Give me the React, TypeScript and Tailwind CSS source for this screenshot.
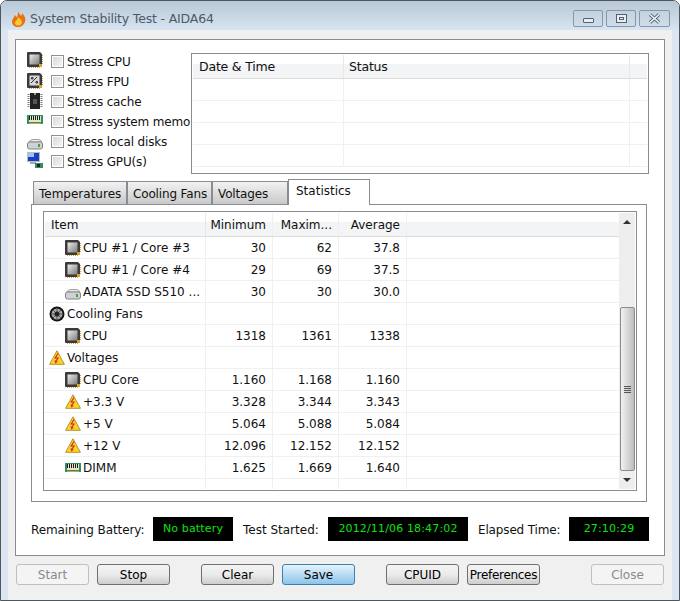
import React from "react";

function CpuIcon({ pct }: { pct?: boolean }) {
  return (
    <svg width="16" height="16" viewBox="0 0 16 16" className="block shrink-0">
      <defs>
        <linearGradient id="cpuG" x1="0" y1="0" x2="1" y2="1">
          <stop offset="0" stopColor="#ececec" />
          <stop offset="1" stopColor="#7c7c7c" />
        </linearGradient>
      </defs>
      <path d="M0 1 Q0 0 1 0 H13 L15 2 V15 H1 Q0 15 0 14 Z" fill="#3a3a3a" />
      <rect x="2.5" y="2.5" width="10" height="10" fill={pct ? "#d8d8d8" : "url(#cpuG)"} />
      {pct && <path d="M4 10 L10 4 M4.5 4.5 h1.5 v1.5 h-1.5z M9 8.5 h1.5 v1.5 h-1.5z" stroke="#333" strokeWidth="1" fill="none" />}
      <path d="M15.5 3 V13 M2 15.5 H13" stroke="#c9a24a" strokeWidth="1" strokeDasharray="1 1" />
      <rect x="12" y="12" width="3" height="3" fill="#d9a520" />
    </svg>
  );
}

function CacheIcon() {
  return (
    <svg width="16" height="16" viewBox="0 0 16 16" className="block shrink-0">
      <rect x="3" y="0" width="10" height="16" fill="#222" />
      <path d="M1.5 1 V15 M14.5 1 V15" stroke="#777" strokeWidth="2" strokeDasharray="1 1" />
      <rect x="6" y="6" width="4" height="5" fill="#555" />
      <rect x="7" y="0" width="2" height="2" fill="#999" />
    </svg>
  );
}

function RamIcon() {
  return (
    <svg width="16" height="10" viewBox="0 0 16 10" className="block shrink-0" shapeRendering="crispEdges">
      <rect x="0" y="0" width="16" height="9" fill="#2f9065" />
      <rect x="2" y="1" width="12" height="6" fill="#e9e4c8" />
      <path d="M2.5 1 V5 M4.5 1 V5 M6.5 1 V5 M8.5 1 V5 M10.5 1 V5 M12.5 1 V5" stroke="#1c1c1c" strokeWidth="1" />
      <path d="M2 8.5 H14" stroke="#d0a83c" strokeWidth="1" />
    </svg>
  );
}

function DiskIcon() {
  return (
    <svg width="16" height="11" viewBox="0 0 16 11" className="mt-[6px] block shrink-0">
      <path d="M2 3 Q3 0.5 6 0.5 H11 Q14 0.5 15 3 Z" fill="#efefef" stroke="#a0a0a0" />
      <rect x="0.5" y="3" width="15" height="7" rx="2" fill="#ced2d4" stroke="#808487" />
      <rect x="11" y="5" width="2" height="3" fill="#4aa04a" />
    </svg>
  );
}

function GpuIcon() {
  return (
    <svg width="16" height="16" viewBox="0 0 16 16" className="-mt-[2px] block shrink-0">
      <rect x="0" y="0" width="13" height="10" fill="#b8bcc4" />
      <rect x="1" y="1" width="11" height="8" fill="#1a3fc0" />
      <path d="M1 1 H7 V5 H1 Z" fill="#9cc4f0" />
      <rect x="3" y="10" width="6" height="2" fill="#aaa" />
      <rect x="8" y="11" width="8" height="5" fill="#2f8f62" />
      <rect x="10" y="12" width="3" height="3" fill="#222" />
    </svg>
  );
}

function FanIcon() {
  return (
    <svg width="16" height="16" viewBox="0 0 16 16" className="block shrink-0">
      <circle cx="8" cy="8" r="7.5" fill="#111" />
      <circle cx="8" cy="8" r="5.5" fill="#a8a8a8" />
      <path d="M8 2.5 V13.5 M2.5 8 H13.5 M4 4 L12 12 M12 4 L4 12" stroke="#555" strokeWidth="1" />
      <circle cx="8" cy="8" r="2.5" fill="#222" />
    </svg>
  );
}

function VoltIcon() {
  return (
    <svg width="16" height="15" viewBox="0 0 16 15" className="block shrink-0">
      <path d="M8 0.8 L15.4 14.3 H0.6 Z" fill="#f8d42a" stroke="#b8912a" strokeLinejoin="round" />
      <path d="M9 3.5 L6.2 8 H9 L7 11 M6 10.5 L6.7 12.6 L8.4 11.4" fill="none" stroke="#d42020" strokeWidth="1.1" />
    </svg>
  );
}

function FlameIcon() {
  return (
    <svg width="14" height="16" viewBox="0 0 14 16" className="mt-[10px] block shrink-0">
      <path d="M6 0 C7 3 8 3 9 5 C10 3.5 10 3 10 2 C13 5 14 8 13 11 C12 14 9 16 6 16 C3 16 0 14 0 11 C0 8 2 7 3 4 C4 5 4 6 5 6 C6 4 6 2 6 0 Z" fill="#e8720e" />
      <path d="M6 6 C8 8 10 9 10 11.5 C10 13.5 8 14.5 6 14.5 C4 14.5 2.5 13 3 11 C4 10 5.5 9 6 6 Z" fill="#f9c83a" />
    </svg>
  );
}

function StressRow({ icon, label, nudge = "" }: { icon: React.ReactNode; label: string; nudge?: string }) {
  return (
    <div className="flex h-[20px] w-[163px] items-center overflow-hidden">
      <div className={`flex w-[24px] shrink-0 items-center justify-start ${nudge}`}>{icon}</div>
      <div className="box-border h-[13px] w-[13px] shrink-0 border border-[#8e8f8f] bg-white p-[1px]">
        <div className="h-full w-full bg-gradient-to-br from-[#d6d9dd] to-[#f4f5f6]" />
      </div>
      <span className="ml-[3px] whitespace-nowrap pt-[2px] tracking-[-0.15px]">{label}</span>
    </div>
  );
}

function WinBtn({ children, w }: { children: React.ReactNode; w: string }) {
  return (
    <div className={`${w} flex h-[17px] items-center justify-center rounded-[2px] border border-[#8696ab] bg-gradient-to-b from-[#c4d1df] to-[#cfdcea]`}>
      {children}
    </div>
  );
}

function Tab({ label, w, pl, tight }: { label: string; w: string; pl: string; tight?: boolean }) {
  return (
    <div className={`${w} ${pl} ${tight ? "tracking-[-0.15px]" : ""} box-border flex h-[23px] items-center whitespace-nowrap border border-b-0 border-[#898c95] bg-gradient-to-b from-[#f2f2f2] to-[#c9c9c9] pt-[2px]`}>
      {label}
    </div>
  );
}

type Row = { icon: React.ReactNode; name: string; min?: string; max?: string; avg?: string; top?: boolean };

const rows: Row[] = [
  { icon: <CpuIcon />, name: "CPU #1 / Core #3", min: "30", max: "62", avg: "37.8" },
  { icon: <CpuIcon />, name: "CPU #1 / Core #4", min: "29", max: "69", avg: "37.5" },
  { icon: <DiskIcon />, name: "ADATA SSD S510 ...", min: "30", max: "30", avg: "30.0" },
  { icon: <FanIcon />, name: "Cooling Fans", top: true },
  { icon: <CpuIcon />, name: "CPU", min: "1318", max: "1361", avg: "1338" },
  { icon: <VoltIcon />, name: "Voltages", top: true },
  { icon: <CpuIcon />, name: "CPU Core", min: "1.160", max: "1.168", avg: "1.160" },
  { icon: <VoltIcon />, name: "+3.3 V", min: "3.328", max: "3.344", avg: "3.343" },
  { icon: <VoltIcon />, name: "+5 V", min: "5.064", max: "5.088", avg: "5.084" },
  { icon: <VoltIcon />, name: "+12 V", min: "12.096", max: "12.152", avg: "12.152" },
  { icon: <RamIcon />, name: "DIMM", min: "1.625", max: "1.669", avg: "1.640" },
];

function Num({ w, children }: { w: string; children?: React.ReactNode }) {
  return (
    <div className={`${w} box-border flex h-full items-center justify-end border-r border-[#f0f0f0] pr-[6px]`}>{children}</div>
  );
}

function Btn({ label, w = "w-[73px]", ml, disabled, primary, tight }: { label: string; w?: string; ml: string; disabled?: boolean; primary?: boolean; tight?: boolean }) {
  const skin = disabled
    ? "border-[#bfbfbf] bg-[#f4f4f4] text-[#8a8a8a]"
    : primary
      ? "border-[#3c7fb1] bg-gradient-to-b from-[#e4f3fc] via-[#b8dcf3] to-[#8cc4ea] text-black"
      : "border-[#707070] bg-gradient-to-b from-[#f4f4f4] via-[#ebebeb] to-[#cdcdcd] text-black";
  return (
    <div className={`${w} ${ml} ${skin} box-border flex h-[21px] shrink-0 items-center justify-center whitespace-nowrap rounded-[3px] border ${tight ? "tracking-[-0.3px]" : ""}`}>
      {label}
    </div>
  );
}

function Led({ w, children }: { w: string; children: string }) {
  return (
    <div className={`${w} flex h-[24px] shrink-0 items-center justify-center bg-black text-[11px] tracking-[0.15px] text-[#0fe00f]`}>
      {children}
    </div>
  );
}

export default function App() {
  return (
    <div className="box-border flex h-[601px] w-[680px] flex-col overflow-hidden rounded-t-[7px] border border-[#50565e] bg-[#dbe6f2] font-['DejaVu_Sans',sans-serif] text-[12px] text-[#111]">
      <div className="flex h-[29px] shrink-0 items-start bg-gradient-to-b from-[#b9c8d6] to-[#d7e4f1] pl-[11px] pr-[9px]">
        <FlameIcon />
        <span className="ml-[4px] mt-[10px] text-[12.5px] leading-[16px] tracking-[-0.17px] text-[#4d5966]">System Stability Test - AIDA64</span>
        <div className="ml-auto mt-[9px] flex gap-[3px]">
          <WinBtn w="w-[30px]">
            <div className="mt-[3px] h-[5px] w-[11px] rounded-[1px] border border-[#55606e] bg-[#e8edf2]" />
          </WinBtn>
          <WinBtn w="w-[30px]">
            <div className="flex h-[9px] w-[11px] items-center justify-center border border-[#55606e] bg-[#e8edf2]">
              <div className="h-[3px] w-[5px] border border-[#55606e]" />
            </div>
          </WinBtn>
          <WinBtn w="w-[31px]">
            <svg width="13" height="11" viewBox="0 0 13 11">
              <path d="M2 1.5 L11 9.5 M11 1.5 L2 9.5" stroke="#5c6875" strokeWidth="3.4" />
              <path d="M2 1.5 L11 9.5 M11 1.5 L2 9.5" stroke="#eef2f6" strokeWidth="1.6" />
            </svg>
          </WinBtn>
        </div>
      </div>

      <div className="mx-[7px] flex flex-1 flex-col bg-[#f0f0f0] px-[7px] pb-[37px] pt-[9px]">
        <div className="box-border h-[517px] border border-[#898c95] bg-white">
          <div className="flex pl-[11px] pt-[11px]">
            <div className="w-[164px] shrink-0">
              <StressRow icon={<CpuIcon />} label="Stress CPU" nudge="-mt-[2px]" />
              <StressRow icon={<CpuIcon pct />} label="Stress FPU" />
              <StressRow icon={<CacheIcon />} label="Stress cache" />
              <StressRow icon={<RamIcon />} label="Stress system memory" nudge="-mt-[2px]" />
              <StressRow icon={<DiskIcon />} label="Stress local disks" />
              <StressRow icon={<GpuIcon />} label="Stress GPU(s)" />
            </div>
            <div className="mt-[2px] box-border h-[121px] w-[458px] overflow-hidden border border-[#898c95] p-[1px]">
              <div className="flex h-[24px] border-b border-[#dcdcdc] bg-[linear-gradient(#fff_0,#fff_40%,#f3f4f6_40%,#f3f4f6_100%)] text-[12.5px] tracking-[-0.2px]">
                <div className="w-[151px] border-r border-[#e8e8e8] pl-[6px] pt-[3px]">Date &amp; Time</div>
                <div className="w-[286px] border-r border-[#e8e8e8] pl-[5px] pt-[3px]">Status</div>
              </div>
              {[0, 1, 2, 3].map((i) => (
                <div key={i} className="flex h-[22px] border-b border-[#f0f0f0]">
                  <div className="w-[151px] border-r border-[#f0f0f0]" />
                  <div className="w-[286px] border-r border-[#f0f0f0]" />
                </div>
              ))}
            </div>
          </div>

          <div className="ml-[17px] mt-[5px] flex h-[25px] items-end">
            <Tab label="Temperatures" w="w-[94px]" pl="pl-[5px]" />
            <Tab label="Cooling Fans" w="w-[85px]" pl="pl-[5px]" tight />
            <Tab label="Voltages" w="w-[76px]" pl="pl-[5px]" tight />
            <div className="relative z-10 -mb-[1px] box-border flex h-[26px] w-[82px] items-start border border-b-0 border-[#898c95] bg-white pl-[7px] pt-[2px]">
              Statistics
            </div>
          </div>

          <div className="ml-[15px] box-border h-[298px] w-[616px] border border-[#898c95] px-[11px] pt-[6px]">
            <div className="box-border flex h-[280px] w-[594px] border border-[#898c95] p-[1px]">
              <div className="flex min-w-0 flex-1 flex-col">
                <div className="flex h-[24px] shrink-0 items-center border-b border-[#dcdcdc] bg-[linear-gradient(#fff_0,#fff_40%,#f3f4f6_40%,#f3f4f6_100%)]">
                  <div className="box-border flex h-full w-[161px] items-center border-r border-[#e8e8e8] pl-[6px]">Item</div>
                  <Num w="w-[67px]">Minimum</Num>
                  <Num w="w-[66px]">Maxim...</Num>
                  <Num w="w-[68px]">Average</Num>
                </div>
                {rows.map((r) => (
                  <div key={r.name + r.min} className="flex h-[22px] shrink-0 items-center border-b border-[#f0f0f0]">
                    <div className={`box-border flex h-full w-[161px] items-center border-r border-[#f0f0f0] whitespace-nowrap ${r.top ? "pl-[4px]" : "pl-[20px]"}`}>
                      <div className="flex w-[18px] shrink-0 items-center">{r.icon}</div>
                      {r.name}
                    </div>
                    <Num w="w-[67px]">{r.min}</Num>
                    <Num w="w-[66px]">{r.max}</Num>
                    <Num w="w-[68px]">{r.avg}</Num>
                  </div>
                ))}
                <div className="flex min-h-0 flex-1">
                  <div className="w-[161px] border-r border-[#f0f0f0]" />
                  <div className="w-[67px] border-r border-[#f0f0f0]" />
                  <div className="w-[66px] border-r border-[#f0f0f0]" />
                  <div className="w-[68px] border-r border-[#f0f0f0]" />
                </div>
              </div>

              <div className="flex w-[16px] shrink-0 flex-col items-center bg-[#eeeeee]">
                <div className="flex h-[18px] w-full items-center justify-center">
                  <div className="h-0 w-0 border-x-[4px] border-b-[4px] border-x-transparent border-b-[#333]" />
                </div>
                <div className="h-[76px]" />
                <div className="box-border flex h-[164px] w-[15px] flex-col items-center justify-center gap-[1px] rounded-[2px] border border-[#8b8b8b] bg-gradient-to-r from-[#f2f2f2] to-[#bdbdbd]">
                  <div className="h-[1px] w-[7px] bg-[#555]" />
                  <div className="h-[1px] w-[7px] bg-[#555]" />
                  <div className="h-[1px] w-[7px] bg-[#555]" />
                  <div className="h-[1px] w-[7px] bg-[#555]" />
                </div>
                <div className="flex h-[18px] w-full items-center justify-center">
                  <div className="h-0 w-0 border-x-[4px] border-t-[4px] border-x-transparent border-t-[#333]" />
                </div>
              </div>
            </div>
          </div>

          <div className="mt-[15px] flex items-center pl-[15px]">
            <span className="w-[122px] shrink-0 whitespace-nowrap pt-[2px] tracking-[-0.1px]">Remaining Battery:</span>
            <Led w="w-[80px]">No battery</Led>
            <span className="ml-[10px] w-[85px] shrink-0 whitespace-nowrap pt-[2px]">Test Started:</span>
            <Led w="w-[140px]">2012/11/06 18:47:02</Led>
            <span className="ml-[10px] w-[91px] shrink-0 whitespace-nowrap pt-[2px] tracking-[-0.15px]">Elapsed Time:</span>
            <Led w="w-[80px]">27:10:29</Led>
          </div>
        </div>

        <div className="flex pt-[8px] pl-[1px]">
          <Btn label="Start" ml="" disabled />
          <Btn label="Stop" ml="ml-[8px]" />
          <Btn label="Clear" ml="ml-[31px]" />
          <Btn label="Save" ml="ml-[8px]" primary />
          <Btn label="CPUID" ml="ml-[31px]" />
          <Btn label="Preferences" ml="ml-[8px]" tight />
          <Btn label="Close" ml="ml-[51px]" disabled />
        </div>
      </div>
      <div className="h-[7px] shrink-0" />
    </div>
  );
}
